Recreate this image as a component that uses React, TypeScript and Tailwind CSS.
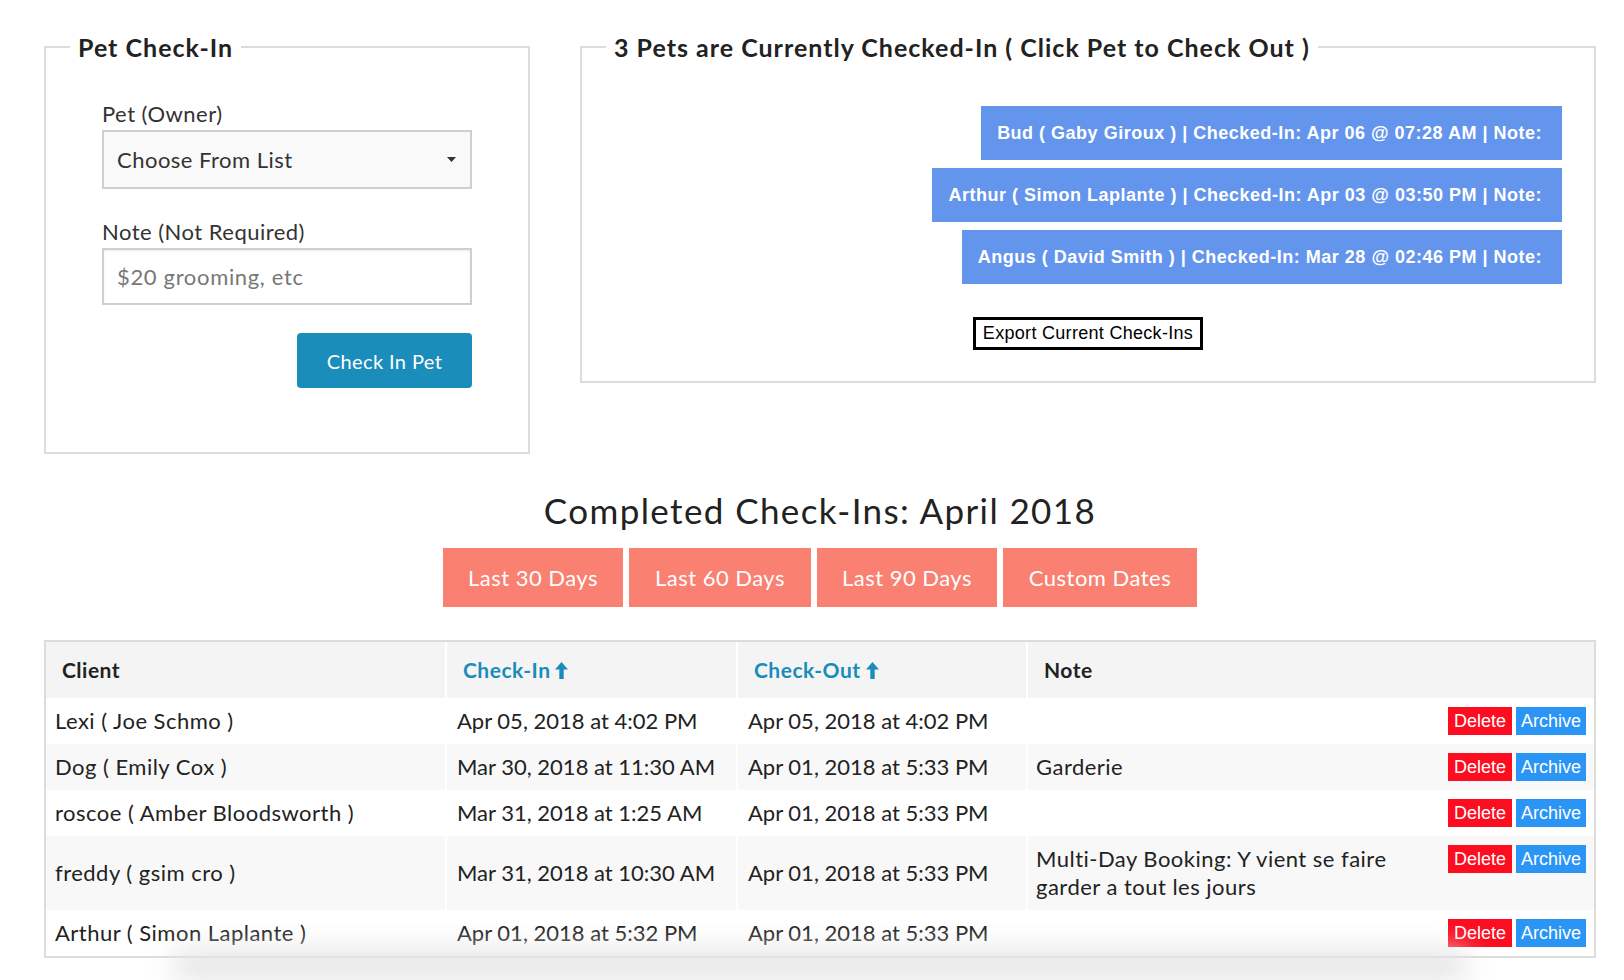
import React from 'react';

const SANS = { fontFamily: 'Lato, "Open Sans", sans-serif' };
const SYS = { fontFamily: '"Liberation Sans", Arial, sans-serif' };

const CURRENT = [
  'Bud ( Gaby Giroux ) | Checked-In: Apr 06 @ 07:28 AM | Note:',
  'Arthur ( Simon Laplante ) | Checked-In: Apr 03 @ 03:50 PM | Note:',
  'Angus ( David Smith ) | Checked-In: Mar 28 @ 02:46 PM | Note:',
];

const RANGES = [
  { label: 'Last 30 Days', w: 'w-[180px]' },
  { label: 'Last 60 Days', w: 'w-[182px]' },
  { label: 'Last 90 Days', w: 'w-[180px]' },
  { label: 'Custom Dates', w: 'w-[194px]' },
];

const ROWS = [
  { client: 'Lexi ( Joe Schmo )', inAt: 'Apr 05, 2018 at 4:02 PM', outAt: 'Apr 05, 2018 at 4:02 PM', note: '' },
  { client: 'Dog ( Emily Cox )', inAt: 'Mar 30, 2018 at 11:30 AM', outAt: 'Apr 01, 2018 at 5:33 PM', note: 'Garderie' },
  { client: 'roscoe ( Amber Bloodsworth )', inAt: 'Mar 31, 2018 at 1:25 AM', outAt: 'Apr 01, 2018 at 5:33 PM', note: '' },
  { client: 'freddy ( gsim cro )', inAt: 'Mar 31, 2018 at 10:30 AM', outAt: 'Apr 01, 2018 at 5:33 PM', note: 'Multi-Day Booking: Y vient se faire garder a tout les jours' },
  { client: 'Arthur ( Simon Laplante )', inAt: 'Apr 01, 2018 at 5:32 PM', outAt: 'Apr 01, 2018 at 5:33 PM', note: '' },
];

const ArrowUp: React.FC = () => (
  <svg width="13" height="17" viewBox="0 0 13 17" className="inline-block ml-[5px] -mt-[4px]">
    <polygon points="6.5,0 13,7.5 8.7,7.5 8.7,17 4.3,17 4.3,7.5 0,7.5" fill="#1a8cba" />
  </svg>
);

export default function App() {
  return (
    <div className="h-[980px] overflow-hidden bg-white pl-[44px] pr-[28px] pt-[32px] text-[#222] tracking-[0.03em]" style={SANS}>
      {/* Top: check-in form + currently checked in */}
      <div className="flex items-start gap-[50px]">
        <fieldset className="w-[486px] border-2 border-[#dcdcdc] px-[56px] pt-[38px] pb-[64px]">
          <legend className="-ml-[32px] px-[8px] text-[25px] leading-[30px] font-bold tracking-[0.04em] text-[#222]">Pet Check-In</legend>
          <label className="block text-[22px] leading-[28px] text-[#333]">Pet (Owner)</label>
          <div className="mt-[2px] h-[59px] flex items-center justify-between border-2 border-[#cfcfcf] bg-[#f9f9f9] pl-[13px] pr-[14px] text-[22px] text-[#333]">
            <span>Choose From List</span>
            <svg width="9" height="5" viewBox="0 0 9 5"><polygon points="0,0 9,0 4.5,5" fill="#333" /></svg>
          </div>
          <label className="block mt-[29px] text-[22px] leading-[28px] text-[#333]">Note (Not Required)</label>
          <input
            className="mt-[2px] block w-full h-[57px] border-2 border-[#cfcfcf] bg-white px-[13px] text-[22px] tracking-[0.03em] text-[#333] placeholder:text-[#777] shadow-[inset_0_1px_2px_rgba(0,0,0,0.08)] outline-none"
            placeholder="$20 grooming, etc"
          />
          <div className="mt-[28px] flex justify-end">
            <button className="w-[175px] h-[55px] rounded-[4px] bg-[#1a8dba] text-white text-[20px] tracking-[0.02em]">Check In Pet</button>
          </div>
        </fieldset>

        <fieldset className="flex-1 border-2 border-[#dcdcdc] pr-[32px] pt-[44px] pb-[31px]">
          <legend className="ml-[24px] px-[8px] text-[25px] leading-[30px] font-bold tracking-[0.04em] text-[#222]">
            3 Pets are Currently Checked-In ( Click Pet to Check Out )
          </legend>
          <div className="flex flex-col items-end gap-[8px]">
            {CURRENT.map((c) => (
              <button
                key={c}
                className="h-[54px] bg-[#6495ed] pl-[16px] pr-[20px] text-white text-[18px] font-bold tracking-[0.5px]"
                style={SYS}
              >
                {c}
              </button>
            ))}
          </div>
          <div className="mt-[33px] flex justify-center pl-[32px]">
            <button className="h-[33px] border-[3px] border-black px-[7px] text-[18px] tracking-[0.3px] text-black" style={SYS}>
              Export Current Check-Ins
            </button>
          </div>
        </fieldset>
      </div>

      {/* Completed check-ins */}
      <h2 className="mt-[36px] text-center text-[35px] leading-[40px] tracking-[0.04em] text-[#222]">Completed Check-Ins: April 2018</h2>
      <div className="mt-[18px] flex justify-center gap-[6px]">
        {RANGES.map((r) => (
          <button key={r.label} className={`${r.w} h-[59px] bg-[#fa8072] text-white text-[22px]`}>
            {r.label}
          </button>
        ))}
      </div>

      <table className="mt-[33px] w-full table-fixed border-separate border-spacing-0 border-2 border-[#dcdcdc]">
        <thead>
          <tr className="bg-[#f4f4f4] text-[21px] font-bold">
            <th className="w-[399px] h-[56px] pl-[16px] text-left">Client</th>
            <th className="w-[291px] pl-[16px] text-left text-[#1a8cba] border-l-2 border-white">Check-In<ArrowUp /></th>
            <th className="w-[290px] pl-[16px] text-left text-[#1a8cba] border-l-2 border-white">Check-Out<ArrowUp /></th>
            <th className="pl-[16px] text-left border-l-2 border-white">Note</th>
          </tr>
        </thead>
        <tbody className="text-[22px] leading-[28px]">
          {ROWS.map((r, i) => (
            <tr key={i} className={i % 2 === 1 ? 'bg-[#f8f8f8]' : 'bg-white'}>
              <td className="py-[9px] pl-[9px] align-middle">{r.client}</td>
              <td className="py-[9px] pl-[10px] align-middle tracking-normal border-l-2 border-white">{r.inAt}</td>
              <td className="py-[9px] pl-[10px] align-middle tracking-normal border-l-2 border-white">{r.outAt}</td>
              <td className="py-[9px] pl-[8px] pr-[8px] align-top border-l-2 border-white">
                <div className="flex items-start justify-between">
                  <div className="w-[372px]">{r.note}</div>
                  <div className="flex gap-[4px] text-[18px] leading-[28px] tracking-normal text-white" style={SYS}>
                    <button className="px-[6px] bg-[#fe0c1f]">Delete</button>
                    <button className="px-[5px] bg-[#2b95f5]">Archive</button>
                  </div>
                </div>
              </td>
            </tr>
          ))}
        </tbody>
      </table>
      <div className="-mt-[8px] mx-[130px] h-[30px] bg-[#e4e4e4] blur-[14px]" />
    </div>
  );
}
